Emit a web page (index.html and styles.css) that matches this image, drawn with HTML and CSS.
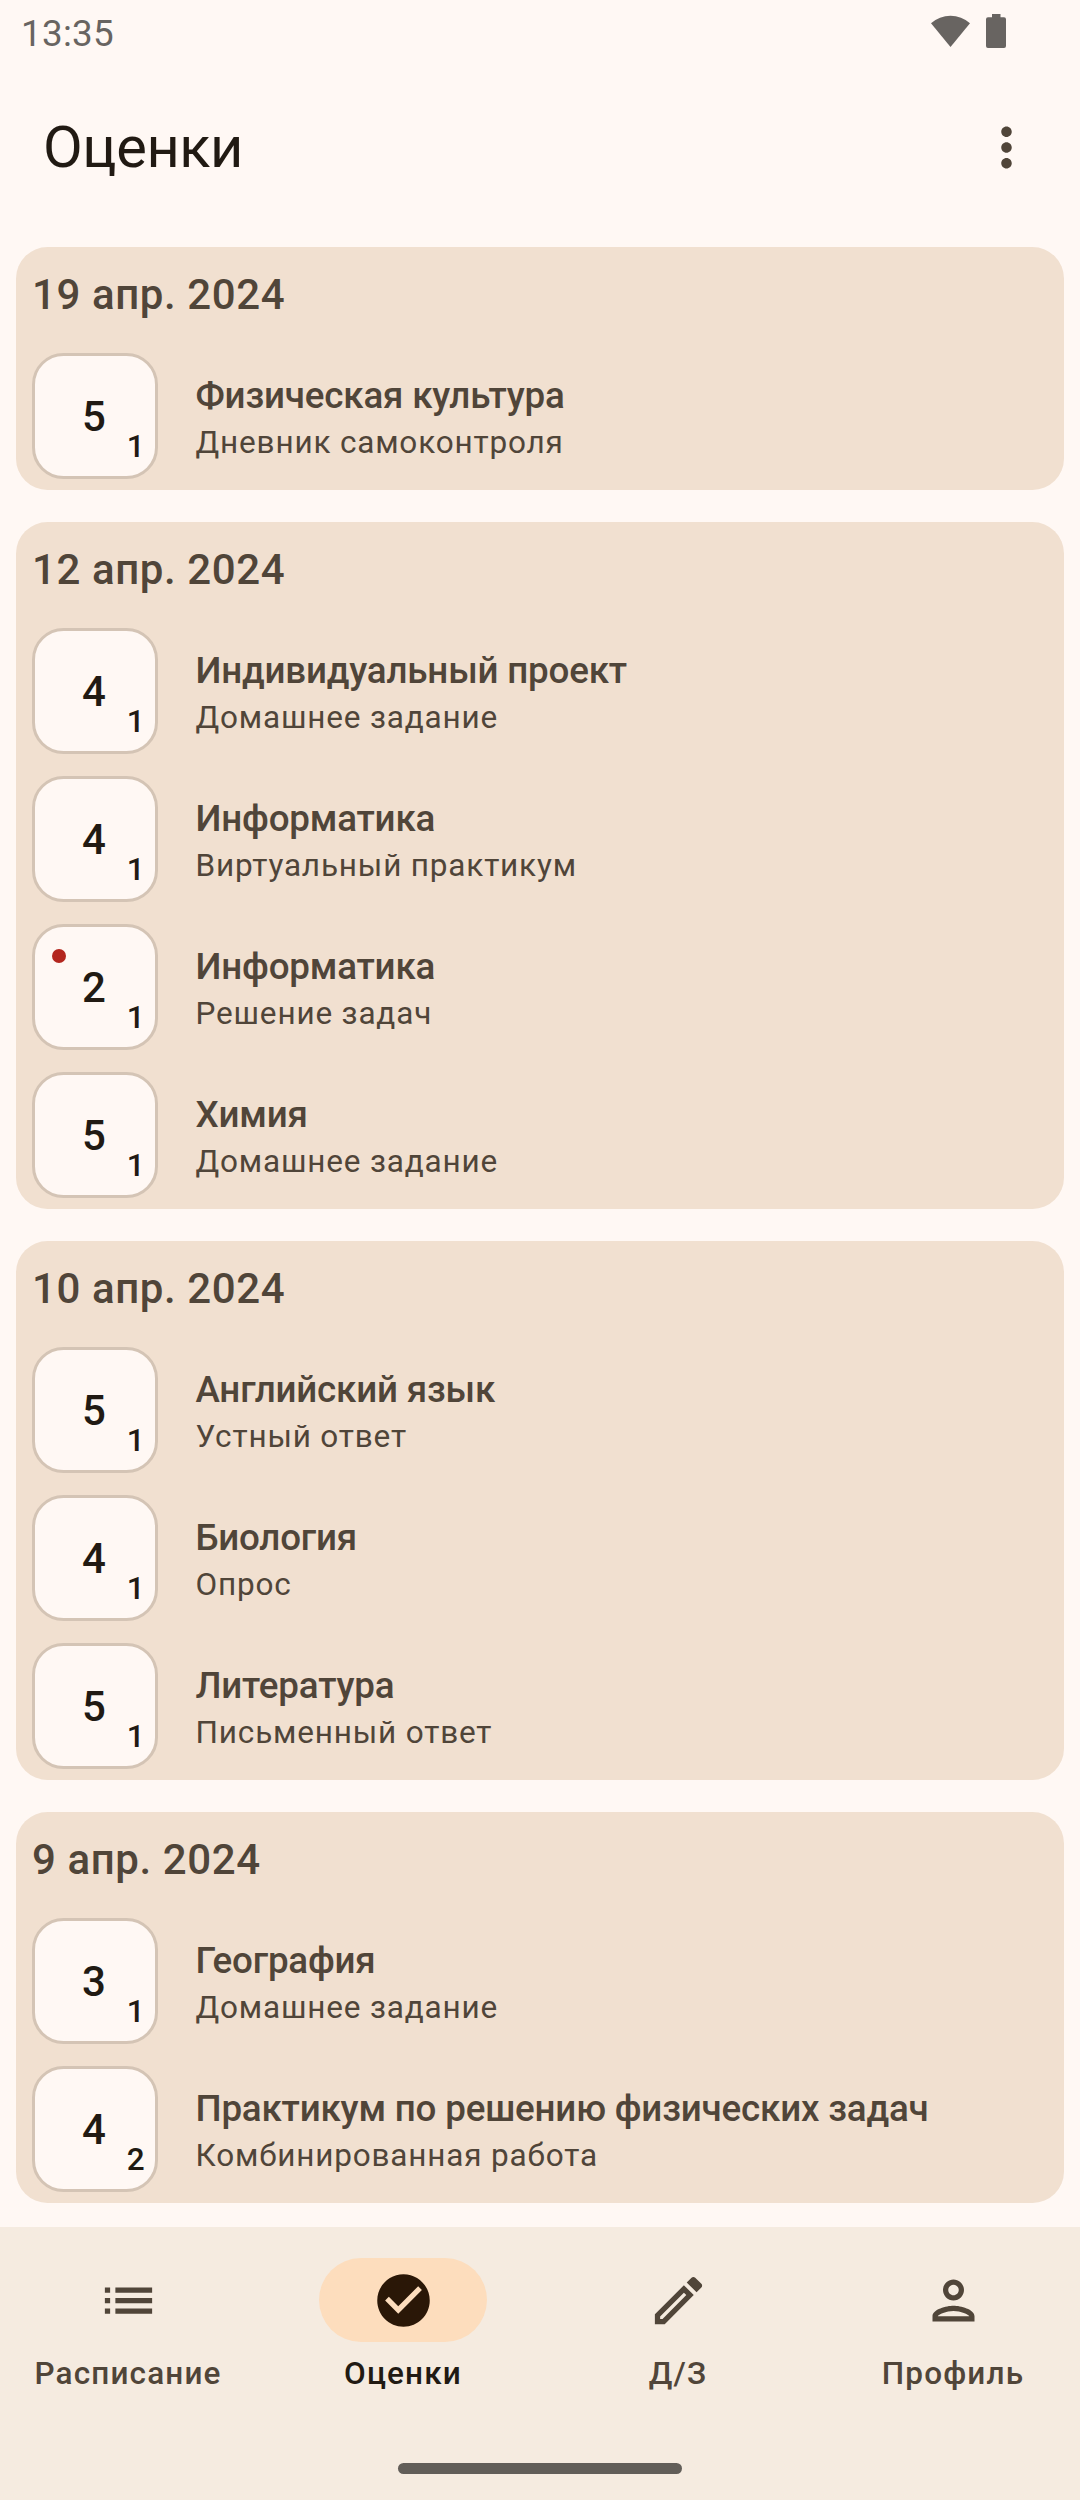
FILE: index.html
```html
<!DOCTYPE html>
<html lang="ru">
<head>
<meta charset="utf-8">
<title>Оценки</title>
<link rel="stylesheet" href="styles.css">
</head>
<body>
<div class="screen">
  <div class="status">
    <span class="time">13:35</span>
    <div class="status-icons">
      <svg class="wifi" viewBox="0 0 39 33"><path d="M0 9.2A29.5 29.5 0 0 1 39 9.2L19.5 33z"/></svg>
      <svg class="battery" viewBox="0 0 20 34"><path d="M6 0h8.5v3.3h3.5a2 2 0 0 1 2 2V32a2 2 0 0 1-2 2H2a2 2 0 0 1-2-2V5.300a2 2 0 0 1 2-2h4z"/></svg>
    </div>
  </div>
  <header class="app-bar">
    <h1 class="title">Оценки</h1>
    <svg class="icon" viewBox="0 0 24 24"><path d="M12 8c1.100 0 2-.9 2-2s-.9-2-2-2-2 .9-2 2 .9 2 2 2zm0 2c-1.100 0-2 .9-2 2s.9 2 2 2 2-.9 2-2-.9-2-2-2zm0 6c-1.100 0-2 .9-2 2s.9 2 2 2 2-.9 2-2-.9-2-2-2z"/></svg>
  </header>
  <main class="list">
    <section class="card">
      <h2 class="date">19 апр. 2024</h2>
      <div class="rows">
        <div class="row"><div class="mark">5<span class="weight">1</span></div><div class="info"><div class="subject">Физическая культура</div><div class="work">Дневник самоконтроля</div></div></div>
      </div>
    </section>
    <section class="card">
      <h2 class="date">12 апр. 2024</h2>
      <div class="rows">
        <div class="row"><div class="mark">4<span class="weight">1</span></div><div class="info"><div class="subject">Индивидуальный проект</div><div class="work">Домашнее задание</div></div></div>
        <div class="row"><div class="mark">4<span class="weight">1</span></div><div class="info"><div class="subject">Информатика</div><div class="work">Виртуальный практикум</div></div></div>
        <div class="row"><div class="mark">2<span class="weight">1</span><span class="dot"></span></div><div class="info"><div class="subject">Информатика</div><div class="work">Решение задач</div></div></div>
        <div class="row"><div class="mark">5<span class="weight">1</span></div><div class="info"><div class="subject">Химия</div><div class="work">Домашнее задание</div></div></div>
      </div>
    </section>
    <section class="card">
      <h2 class="date">10 апр. 2024</h2>
      <div class="rows">
        <div class="row"><div class="mark">5<span class="weight">1</span></div><div class="info"><div class="subject">Английский язык</div><div class="work">Устный ответ</div></div></div>
        <div class="row"><div class="mark">4<span class="weight">1</span></div><div class="info"><div class="subject">Биология</div><div class="work">Опрос</div></div></div>
        <div class="row"><div class="mark">5<span class="weight">1</span></div><div class="info"><div class="subject">Литература</div><div class="work">Письменный ответ</div></div></div>
      </div>
    </section>
    <section class="card">
      <h2 class="date">9 апр. 2024</h2>
      <div class="rows">
        <div class="row"><div class="mark">3<span class="weight">1</span></div><div class="info"><div class="subject">География</div><div class="work">Домашнее задание</div></div></div>
        <div class="row"><div class="mark">4<span class="weight">2</span></div><div class="info"><div class="subject">Практикум по решению физических задач</div><div class="work">Комбинированная работа</div></div></div>
      </div>
    </section>
  </main>
  <footer class="bottom">
    <nav class="tabs">
      <div class="tab">
        <div class="pill"><svg class="icon" viewBox="0 0 24 24"><path d="M3 13h2v-2H3v2zm0 4h2v-2H3v2zm0-8h2V7H3v2zm4 4h14v-2H7v2zm0 4h14v-2H7v2zM7 7v2h14V7H7z"/></svg></div>
        <span class="label">Расписание</span>
      </div>
      <div class="tab active">
        <div class="pill"><svg class="icon" viewBox="0 0 24 24"><path d="M12 2C6.480 2 2 6.480 2 12s4.480 10 10 10 10-4.480 10-10S17.520 2 12 2zm-2 15l-5-5 1.410-1.410L10 14.170l7.590-7.590L19 8l-9 9z"/></svg></div>
        <span class="label">Оценки</span>
      </div>
      <div class="tab">
        <div class="pill"><svg class="icon" viewBox="0 0 24 24"><path d="M14.060 9.020l.92.92L5.920 19H5v-.92l9.060-9.060M17.660 3c-.25 0-.51.1-.7.29l-1.830 1.830 3.750 3.750 1.830-1.830c.39-.39.39-1.020 0-1.410l-2.340-2.340c-.2-.2-.45-.29-.71-.29zm-3.600 3.190L3 17.250V21h3.750L17.810 9.940l-3.750-3.750z"/></svg></div>
        <span class="label">Д/З</span>
      </div>
      <div class="tab">
        <div class="pill"><svg class="icon" viewBox="0 0 24 24"><path d="M12 6c1.100 0 2 .9 2 2s-.9 2-2 2-2-.9-2-2 .9-2 2-2m0 10c2.700 0 5.800 1.290 6 2H6c.23-.72 3.310-2 6-2m0-12C9.790 4 8 5.790 8 8s1.790 4 4 4 4-1.790 4-4-1.790-4-4-4zm0 10c-2.670 0-8 1.340-8 4v2h16v-2c0-2.660-5.330-4-8-4z"/></svg></div>
        <span class="label">Профиль</span>
      </div>
    </nav>
    <div class="handle"></div>
  </footer>
</div>
</body>
</html>
```
FILE: styles.css
```css
* { box-sizing: border-box; }
body {
  margin: 0;
  background: #fff8f4;
  color: #504539;
  font-family: Roboto, "Noto Sans", sans-serif;
}
h1, h2 { margin: 0; }
svg { display: block; fill: currentColor; }
.screen {
  width: 1080px;
  height: 2500px;
  display: flex;
  flex-direction: column;
  overflow: hidden;
}
.status {
  height: 67px;
  padding: 0 74px 0 21px;
  display: flex;
  justify-content: space-between;
  color: #686461;
}
.time { font-size: 36.75px; line-height: 67px; letter-spacing: 0.3px; }
.status-icons { display: flex; gap: 16px; padding-top: 14px; }
.wifi { width: 39px; height: 33px; }
.battery { width: 20px; height: 34px; }
.app-bar {
  height: 160px;
  padding: 0 42px 0 43px;
  display: flex;
  align-items: center;
  justify-content: space-between;
}
.title {
  font-size: 57.75px;
  font-weight: 400;
  line-height: 74px;
  letter-spacing: -0.4px;
  color: #211a13;
}
.icon { width: 63px; height: 63px; }
.list {
  height: 2000px;
  padding: 20px 16px 0;
  display: flex;
  flex-direction: column;
  gap: 32px;
}
.card {
  padding: 16px 16px 11px;
  border-radius: 31.5px;
  background: #f1e0d0;
}
.date {
  margin-bottom: 27px;
  font-size: 42px;
  font-weight: 500;
  line-height: 63px;
  letter-spacing: 0.6px;
}
.rows { display: flex; flex-direction: column; gap: 22px; }
.row { display: flex; align-items: center; gap: 37.5px; }
.info { padding-top: 2px; }
.mark {
  position: relative;
  width: 126px;
  height: 126px;
  padding-right: 2px;
  border: 3px solid #d4c4b5;
  border-radius: 31.5px;
  background: #fff8f4;
  color: #211a13;
  font-size: 42px;
  font-weight: 500;
  line-height: 122px;
  text-align: center;
}
.weight {
  position: absolute;
  right: 9px;
  top: 70px;
  font-size: 31.5px;
  line-height: 42px;
  letter-spacing: 1.3px;
}
.dot {
  position: absolute;
  left: 17px;
  top: 22px;
  width: 14px;
  height: 14px;
  border-radius: 50%;
  background: #b3261e;
}
.subject {
  font-size: 36.75px;
  font-weight: 500;
  line-height: 52px;
  letter-spacing: -0.19px;
}
.work {
  font-size: 31.5px;
  line-height: 42px;
  letter-spacing: 0.83px;
}
.bottom {
  height: 273px;
  padding-top: 31px;
  display: flex;
  flex-direction: column;
  align-items: center;
  background: #f5ebe0;
}
.tabs {
  width: 100%;
  padding-left: 1px;
  display: grid;
  grid-template-columns: repeat(4, 1fr);
  gap: 21px;
}
.tab {
  display: flex;
  flex-direction: column;
  align-items: center;
  gap: 11px;
}
.pill {
  width: 168px;
  height: 84px;
  border-radius: 42px;
  display: flex;
  align-items: center;
  justify-content: center;
}
.active .pill { background: #fdddbd; color: #2a1707; }
.active .label { color: #211a13; }
.label {
  font-size: 31.5px;
  font-weight: 500;
  line-height: 42px;
  letter-spacing: 1.15px;
}
.handle {
  width: 284px;
  height: 11px;
  margin-top: 68px;
  border-radius: 6px;
  background: #625e59;
}
```
